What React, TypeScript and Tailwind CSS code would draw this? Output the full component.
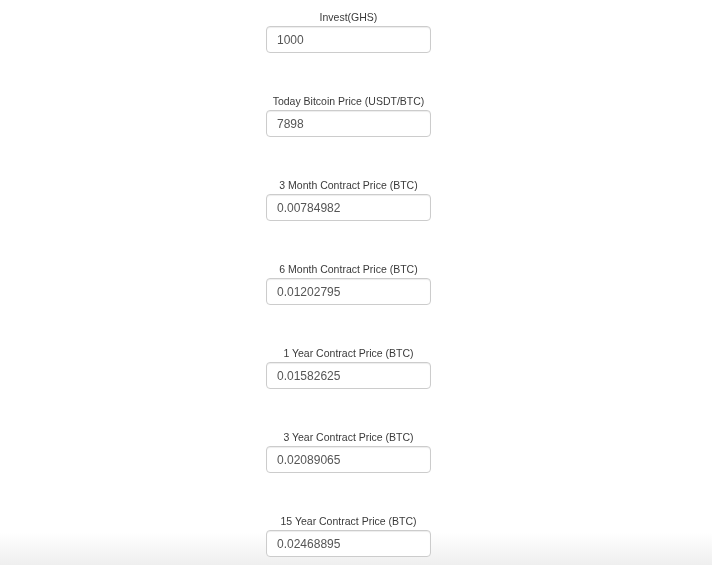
const fields = [
  { label: "Invest(GHS)", value: "1000" },
  { label: "Today Bitcoin Price (USDT/BTC)", value: "7898" },
  { label: "3 Month Contract Price (BTC)", value: "0.00784982" },
  { label: "6 Month Contract Price (BTC)", value: "0.01202795" },
  { label: "1 Year Contract Price (BTC)", value: "0.01582625" },
  { label: "3 Year Contract Price (BTC)", value: "0.02089065" },
  { label: "15 Year Contract Price (BTC)", value: "0.02468895" },
];

export default function App() {
  return (
    <div className="relative min-h-screen bg-white font-['Liberation_Sans',Arial,sans-serif] text-[#3a3a3a]">
      {/* bottom fade, sits behind the form */}
      <div className="fixed bottom-0 left-0 right-0 h-[32px] bg-gradient-to-b from-white to-[#efefef]" />
      <div className="relative z-10 flex flex-col items-center pt-[10px] pr-[15px] gap-[41px]">
        {fields.map((f) => (
          <div key={f.label} className="flex flex-col items-center">
            <label className="block text-[10.5px] leading-[15px] mb-[1px]">{f.label}</label>
            <input
              className="w-[165px] h-[27px] px-[10px] bg-white border border-[#ccc] rounded-[4px] text-[12px] text-[#555] outline-none shadow-[inset_0_1px_1px_rgba(0,0,0,0.075)]"
              defaultValue={f.value}
            />
          </div>
        ))}
      </div>
    </div>
  );
}
